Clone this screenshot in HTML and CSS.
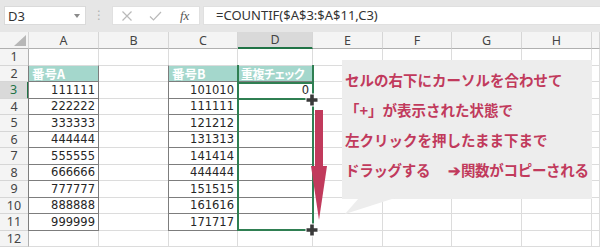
FILE: index.html
```html
<!DOCTYPE html>
<html lang="ja">
<head>
<meta charset="utf-8">
<link rel="stylesheet" href="styles.css">
</head>
<body>
<div class="page">
  <div class="toolbar">
    <div class="namebox"><span>D3</span><svg class="dd" width="6" height="4" viewBox="0 0 6 4"><polygon points="0,0 6,0 3,4" fill="#8a8a8a"/></svg></div>
    <div class="grip">⋮</div>
    <div class="fxbox">
      <svg width="12" height="12" viewBox="0 0 12 12"><path d="M1.5 1.5 L10.5 10.5 M10.5 1.5 L1.5 10.5" stroke="#b9b9b9" stroke-width="1.2" fill="none"/></svg>
      <svg width="13" height="12" viewBox="0 0 13 12"><path d="M1 6.5 L4.5 10 L12 2" stroke="#b9b9b9" stroke-width="1.2" fill="none"/></svg>
      <span class="fx">fx</span>
    </div>
    <div class="formula">=COUNTIF($A$3:$A$11,C3)</div>
  </div>

  <div class="sheet">
    <div class="c ch corner"><svg width="12" height="11" viewBox="0 0 12 11"><polygon points="12,0 12,11 0,11" fill="#b7b7b7"/></svg></div>
    <div class="c ch">A</div><div class="c ch">B</div><div class="c ch">C</div><div class="c ch on">D</div><div class="c ch">E</div><div class="c ch">F</div><div class="c ch">G</div><div class="c ch">H</div><div class="c ch"></div>

    <div class="c rh">1</div><div class="c"></div><div class="c"></div><div class="c"></div><div class="c"></div><div class="c"></div><div class="c"></div><div class="c"></div><div class="c"></div><div class="c"></div>

    <div class="c rh">2</div><div class="c tb th">番号A</div><div class="c"></div><div class="c tb th thc">番号B</div><div class="c tb th thd">重複チェック</div><div class="c"></div><div class="c"></div><div class="c"></div><div class="c"></div><div class="c"></div>

    <div class="c rh on">3</div><div class="c tb n">111111</div><div class="c"></div><div class="c tb n">101010</div><div class="c tb n">0</div><div class="c"></div><div class="c"></div><div class="c"></div><div class="c"></div><div class="c"></div>

    <div class="c rh">4</div><div class="c tb n">222222</div><div class="c"></div><div class="c tb n">111111</div><div class="c tb n"></div><div class="c"></div><div class="c"></div><div class="c"></div><div class="c"></div><div class="c"></div>

    <div class="c rh">5</div><div class="c tb n">333333</div><div class="c"></div><div class="c tb n">121212</div><div class="c tb n"></div><div class="c"></div><div class="c"></div><div class="c"></div><div class="c"></div><div class="c"></div>

    <div class="c rh">6</div><div class="c tb n">444444</div><div class="c"></div><div class="c tb n">131313</div><div class="c tb n"></div><div class="c"></div><div class="c"></div><div class="c"></div><div class="c"></div><div class="c"></div>

    <div class="c rh">7</div><div class="c tb n">555555</div><div class="c"></div><div class="c tb n">141414</div><div class="c tb n"></div><div class="c"></div><div class="c"></div><div class="c"></div><div class="c"></div><div class="c"></div>

    <div class="c rh">8</div><div class="c tb n">666666</div><div class="c"></div><div class="c tb n">444444</div><div class="c tb n"></div><div class="c"></div><div class="c"></div><div class="c"></div><div class="c"></div><div class="c"></div>

    <div class="c rh">9</div><div class="c tb n">777777</div><div class="c"></div><div class="c tb n">151515</div><div class="c tb n"></div><div class="c"></div><div class="c"></div><div class="c"></div><div class="c"></div><div class="c"></div>

    <div class="c rh">10</div><div class="c tb n">888888</div><div class="c"></div><div class="c tb n">161616</div><div class="c tb n"></div><div class="c"></div><div class="c"></div><div class="c"></div><div class="c"></div><div class="c"></div>

    <div class="c rh">11</div><div class="c tb n">999999</div><div class="c"></div><div class="c tb n">171717</div><div class="c tb n"></div><div class="c"></div><div class="c"></div><div class="c"></div><div class="c"></div><div class="c"></div>

    <div class="c rh">12</div><div class="c"></div><div class="c"></div><div class="c"></div><div class="c"></div><div class="c"></div><div class="c"></div><div class="c"></div><div class="c"></div><div class="c"></div>
  </div>

  <div class="sel"></div>
  <div class="act"></div>

  <svg class="arrow" width="18" height="112" viewBox="0 0 18 112"><rect x="5" y="0" width="8" height="57" fill="#c13a5c"/><polygon points="1,56 17,56 9,110" fill="#c13a5c"/></svg>

  <svg class="plus p1" width="16" height="16" viewBox="0 0 16 16"><path d="M8 1.5 V14.5 M1.5 8 H14.5" stroke="#fff" stroke-width="6"/><path d="M8 2.5 V13.5 M2.5 8 H13.5" stroke="#3a3a3a" stroke-width="3.6"/></svg>
  <svg class="plus p2" width="16" height="16" viewBox="0 0 16 16"><path d="M8 1.5 V14.5 M1.5 8 H14.5" stroke="#fff" stroke-width="6"/><path d="M8 2.5 V13.5 M2.5 8 H13.5" stroke="#3a3a3a" stroke-width="3.6"/></svg>

  <div class="callout">
    <p>セルの右下にカーソルを合わせて</p>
    <p>「+」が表示された状態で</p>
    <p>左クリックを押したまま下まで</p>
    <p>ドラッグする<span class="gap"></span>➔関数がコピーされる</p>
  </div>
  <svg class="tail" width="52" height="17" viewBox="0 0 52 17"><polygon points="15,0 51,0 1,16" fill="#ededed"/></svg>
</div>
</body>
</html>
```

FILE: styles.css
```css
html, body {
  margin: 0;
  padding: 0;
  background: #ffffff;
  overflow: hidden;
}
.page {
  position: relative;
  width: 600px;
  height: 248px;
  overflow: hidden;
}
.toolbar {
  height: 32px;
  box-sizing: border-box;
  background: #e6e6e6;
  display: flex;
  align-items: flex-start;
  padding: 6px 0 0 4px;
}
.namebox {
  width: 82px;
  height: 19px;
  box-sizing: border-box;
  background: #fff;
  border: 1px solid #dadada;
  display: flex;
  align-items: center;
  justify-content: space-between;
  padding: 0 5px 0 3px;
  font: 13px "Noto Sans", sans-serif;
  color: #333;
}
.dd { margin-top: 1px; }
.grip {
  width: 26px;
  height: 19px;
  text-align: center;
  font: 12px "DejaVu Sans", sans-serif;
  color: #b0b0b0;
  line-height: 19px;
}
.fxbox {
  width: 88px;
  height: 19px;
  box-sizing: border-box;
  background: #fff;
  border: 1px solid #e0e0e0;
  display: flex;
  align-items: center;
  gap: 16px;
  padding-left: 8px;
}
.fx {
  font: italic 13px "Liberation Serif", serif;
  color: #555;
  margin-left: 2px;
}
.formula {
  flex: 1;
  margin-left: 3px;
  height: 19px;
  box-sizing: border-box;
  background: #fff;
  border: 1px solid #e0e0e0;
  border-right: none;
  padding-left: 12px;
  font: 13px "Noto Sans", sans-serif;
  line-height: 17px;
  color: #333;
}
.sheet {
  display: grid;
  grid-template-columns: 29px 70px 70px 69px 75px 70px 69px 70px 70px 1fr;
  grid-template-rows: 17px repeat(12, 16.5px);
}
.c {
  box-sizing: border-box;
  border-right: 1px solid #dcdcdc;
  border-bottom: 1px solid #dcdcdc;
  display: flex;
  align-items: center;
  padding: 0 3px;
  overflow: hidden;
  white-space: nowrap;
  font: 11.5px "DejaVu Sans", sans-serif;
  color: #262626;
}
.n { justify-content: flex-end; }
.ch {
  background: #f4f4f4;
  border-right-color: #d6d6d6;
  border-bottom-color: #b0b0b0;
  justify-content: center;
  font: 12.5px "Noto Sans", sans-serif;
  color: #444;
}
.ch.on {
  background: #d9d9d9;
  border-bottom: 2px solid #217346;
}
.corner {
  justify-content: flex-end;
  align-items: flex-end;
  padding: 0 2px 2px 0;
}
.rh {
  background: #f4f4f4;
  border-right-color: #b0b0b0;
  border-bottom-color: #d6d6d6;
  justify-content: center;
  font: 12.5px "Noto Sans", sans-serif;
  color: #444;
}
.rh.on {
  background: #d9d9d9;
  color: #217346;
  border-right: 2px solid #217346;
}
.tb {
  border: 1px solid #7d7d7d;
  margin: -1px 0 0 -1px;
}
.th {
  background: #a4d7cc;
  color: #fff;
  font: bold 12.5px "Noto Sans CJK JP", sans-serif;
  border-top-color: #dcdcdc;
}
.thc { border-right-color: #ffffff; }
.thd {
  font-size: 12px;
  letter-spacing: -0.6px;
  font-feature-settings: "palt";
}
.sel {
  position: absolute;
  left: 237px;
  top: 65px;
  width: 77px;
  height: 166px;
  box-sizing: border-box;
  border: 2px solid #2f7f52;
  border-top: none;
}
.act {
  position: absolute;
  left: 237px;
  top: 82px;
  width: 77px;
  height: 18px;
  box-sizing: border-box;
  border: 2px solid #2f7f52;
}
.arrow {
  position: absolute;
  left: 310px;
  top: 110px;
}
.plus {
  position: absolute;
}
.p1 { left: 304px; top: 92px; }
.p2 { left: 304px; top: 222px; }
.callout {
  position: absolute;
  left: 342px;
  top: 60px;
  width: 250px;
  height: 139px;
  box-sizing: border-box;
  background: #ededed;
  padding: 9px 0 0 3px;
}
.callout p {
  margin: 0;
  height: 30px;
  line-height: 30px;
  font: bold 14.5px "Noto Sans CJK JP", sans-serif;
  color: #c13a5c;
  white-space: nowrap;
}
.callout .gap {
  display: inline-block;
  width: 18px;
}
.callout p:last-child {
  letter-spacing: -0.3px;
}
.tail {
  position: absolute;
  left: 344px;
  top: 198px;
}
```
